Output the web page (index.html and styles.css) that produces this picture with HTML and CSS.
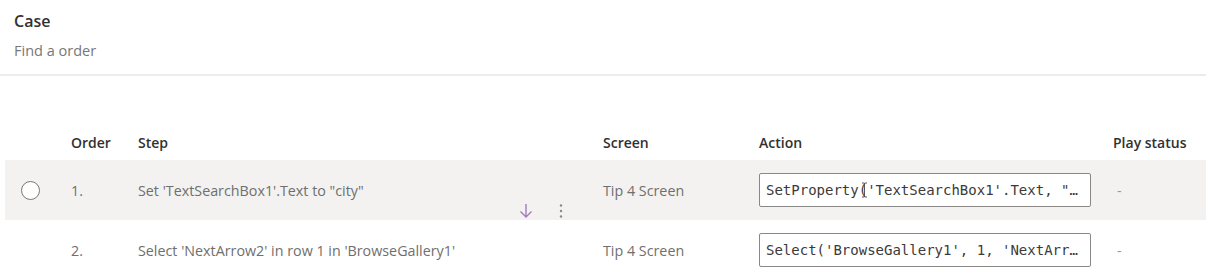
FILE: index.html
```html
<!DOCTYPE html>
<html lang="en">
<head>
    <meta charset="UTF-8">
    <meta name="viewport" content="width=device-width, initial-scale=1.0">
    <title>Case</title>
    <link rel="stylesheet" href="styles.css">
</head>
<body>

<div class="case-header">
    <div class="case-title">Case</div>
    <div class="case-desc">Find a order</div>
</div>

<div class="steps">
    <div class="step-row head">
        <div class="cell"></div>
        <div class="cell">Order</div>
        <div class="cell">Step</div>
        <div class="cell">Screen</div>
        <div class="cell">Action</div>
        <div class="cell">Play status</div>
    </div>

    <div class="step-row selected">
        <div class="cell"><span class="radio"></span></div>
        <div class="cell">1.</div>
        <div class="cell step-cell">
            <span>Set 'TextSearchBox1'.Text to "city"</span>
            <div class="row-actions">
                <svg class="move-down" width="14" height="16" viewBox="0 0 14 16">
                    <path d="M7 1 V14 M1.5 8.5 L7 14 L12.5 8.5" fill="none" stroke="#a27db8" stroke-width="1.4"/>
                </svg>
                <svg class="more" width="4" height="16" viewBox="0 0 4 16">
                    <circle cx="2" cy="2.5" r="1.2" fill="#8a8886"/>
                    <circle cx="2" cy="8" r="1.2" fill="#8a8886"/>
                    <circle cx="2" cy="13.5" r="1.2" fill="#8a8886"/>
                </svg>
            </div>
        </div>
        <div class="cell">Tip 4 Screen</div>
        <div class="cell">
            <div class="action-box">
                <span class="action-text">SetProperty('TextSearchBox1'.Text, "&hellip;</span>
                <svg class="ibeam" width="7" height="16" viewBox="0 0 7 16">
                    <path d="M1 1 H3 Q3.5 1 3.5 2 V14 Q3.5 15 3 15 H1 M6 1 H4 Q3.5 1 3.5 2 M3.5 14 Q3.5 15 4 15 H6" fill="none" stroke="#444" stroke-width="0.9"/>
                </svg>
            </div>
        </div>
        <div class="cell status">-</div>
    </div>

    <div class="step-row">
        <div class="cell"></div>
        <div class="cell">2.</div>
        <div class="cell">Select 'NextArrow2' in row 1 in 'BrowseGallery1'</div>
        <div class="cell">Tip 4 Screen</div>
        <div class="cell">
            <div class="action-box">
                <span class="action-text">Select('BrowseGallery1', 1, 'NextArr&hellip;</span>
            </div>
        </div>
        <div class="cell status">-</div>
    </div>
</div>

</body>
</html>
```

FILE: styles.css
```css
body {
    font-family: "Open Sans", "Noto Sans", Arial, sans-serif;
    margin: 0;
    padding: 0;
    background-color: #fff;
    color: #323130;
}
.case-header {
    padding: 10px 14px 13px;
    border-bottom: 2px solid #ececec;
}
.case-title {
    font-size: 16px;
    font-weight: 600;
    line-height: 22px;
}
.case-desc {
    margin-top: 9px;
    font-size: 14.5px;
    line-height: 20px;
    color: #777;
}
.steps {
    margin-top: 49px;
    margin-left: 5px;
}
.step-row {
    display: grid;
    grid-template-columns: 66px 67px 465px 156px 354px 1fr;
    height: 60px;
    font-size: 14.3px;
    color: #6f6f6f;
}
.step-row.head {
    height: 35px;
    font-size: 14px;
    font-weight: 600;
    color: #323130;
}
.step-row.selected {
    background: #f3f2f1;
}
.cell {
    display: flex;
    align-items: center;
    white-space: nowrap;
}
.radio {
    width: 17px;
    height: 17px;
    margin-left: 16px;
    border: 1.5px solid #777;
    border-radius: 50%;
    background: #fff;
}
.step-cell {
    position: relative;
}
.row-actions {
    position: absolute;
    right: 40px;
    bottom: 1px;
    display: flex;
    align-items: center;
    gap: 26px;
}
.row-actions svg {
    display: block;
}
.action-box {
    position: relative;
    width: 332px;
    height: 34px;
    box-sizing: border-box;
    border: 1px solid #8a8886;
    border-radius: 2px;
    background: #fff;
    padding: 0 6px;
    display: flex;
    align-items: center;
}
.action-text {
    white-space: nowrap;
    font-family: "DejaVu Sans Mono", "Liberation Mono", monospace;
    font-size: 14px;
    color: #3b3a39;
}
.ibeam {
    position: absolute;
    left: 101px;
    top: 8px;
}
.status {
    padding-left: 4px;
    color: #999;
}
```
